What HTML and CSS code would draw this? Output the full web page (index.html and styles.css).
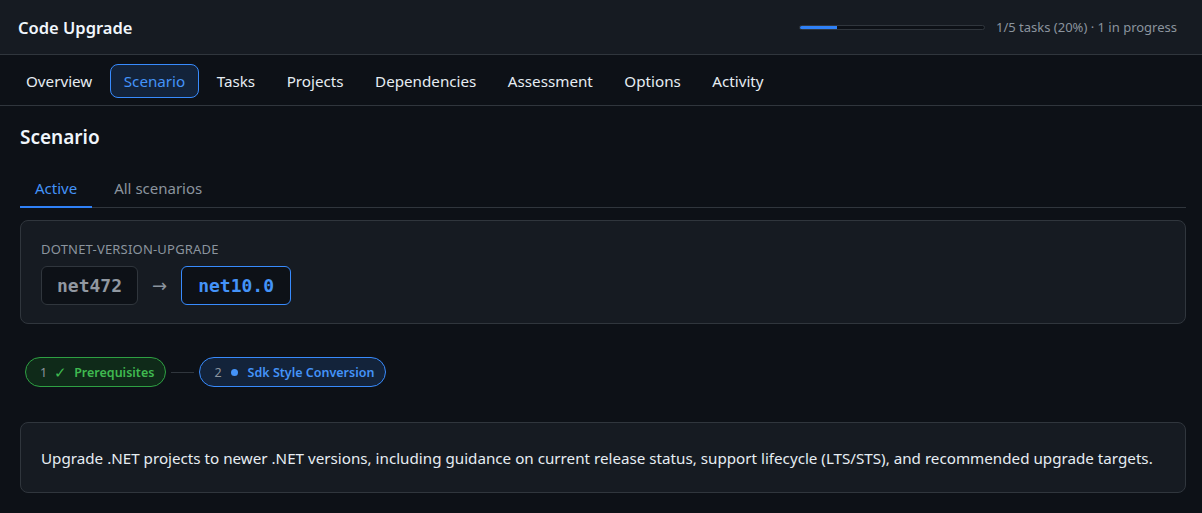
FILE: index.html
```html
<!DOCTYPE html>
<html lang="en">

<head>
    <meta charset="UTF-8">
    <meta name="viewport" content="width=device-width, initial-scale=1.0">
    <title>Code Upgrade</title>
    <link rel="stylesheet" href="styles.css">
</head>

<body>
    <!-- Top bar -->
    <header class="topbar">
        <h1 class="app-title">Code Upgrade</h1>
        <div class="progress">
            <div class="progress-track">
                <div class="progress-fill" style="width: 20%"></div>
            </div>
            <span class="progress-text">1/5 tasks (20%) · 1 in progress</span>
        </div>
    </header>

    <!-- Main navigation -->
    <nav class="main-nav">
        <a class="nav-item">Overview</a>
        <a class="nav-item active">Scenario</a>
        <a class="nav-item">Tasks</a>
        <a class="nav-item">Projects</a>
        <a class="nav-item">Dependencies</a>
        <a class="nav-item">Assessment</a>
        <a class="nav-item">Options</a>
        <a class="nav-item">Activity</a>
    </nav>

    <main class="content">
        <h2 class="section-title">Scenario</h2>

        <div class="sub-tabs">
            <span class="sub-tab active">Active</span>
            <span class="sub-tab">All scenarios</span>
        </div>

        <!-- Scenario card -->
        <section class="card scenario-card">
            <div class="scenario-id">DOTNET-VERSION-UPGRADE</div>
            <div class="versions">
                <span class="chip">net472</span>
                <span class="arrow">→</span>
                <span class="chip chip-target">net10.0</span>
            </div>
        </section>

        <!-- Stages -->
        <div class="stages">
            <span class="stage done">
                <span class="stage-num">1</span>
                <span class="stage-icon">✓</span>
                <span class="stage-name">Prerequisites</span>
            </span>
            <span class="stage-link"></span>
            <span class="stage current">
                <span class="stage-num">2</span>
                <span class="stage-dot"></span>
                <span class="stage-name">Sdk Style Conversion</span>
            </span>
        </div>

        <section class="card desc-card">
            Upgrade .NET projects to newer .NET versions, including guidance on current release status, support lifecycle (LTS/STS), and recommended upgrade targets.
        </section>
    </main>
</body>

</html>
```

FILE: styles.css
```css
* {
    box-sizing: border-box;
}

body {
    margin: 0;
    background: #0d1117;
    color: #e6edf3;
    font-family: "Noto Sans", "Open Sans", sans-serif;
}

/* Top bar */

.topbar {
    height: 55px;
    display: flex;
    align-items: center;
    justify-content: space-between;
    padding: 0 25px 0 18px;
    background: #161b22;
    border-bottom: 1px solid #30363d;
}

.app-title {
    margin: 0;
    font-size: 16.5px;
    font-weight: 600;
    color: #f0f6fc;
}

.progress {
    display: flex;
    align-items: center;
    gap: 11px;
}

.progress-track {
    width: 186px;
    height: 5px;
    background: #0d1117;
    border: 1px solid #30363d;
    border-radius: 3px;
    overflow: hidden;
}

.progress-fill {
    height: 100%;
    background: #2f81f7;
}

.progress-text {
    font-size: 13px;
    color: #8b949e;
}

/* Main navigation */

.main-nav {
    height: 51px;
    display: flex;
    align-items: center;
    gap: 3.5px;
    padding: 1px 12px 0;
    border-bottom: 1px solid #30363d;
}

.nav-item {
    padding: 6px 13px;
    font-size: 15.2px;
    color: #e6edf3;
    border: 1px solid transparent;
    border-radius: 8px;
    cursor: pointer;
}

.nav-item.active {
    color: #4493f8;
    background: #13233a;
    border-color: #388bfd;
}

/* Content */

.content {
    padding: 18px 16px 0 20px;
}

.section-title {
    margin: 0 0 25px;
    font-size: 19px;
    font-weight: 600;
    color: #f0f6fc;
}

.sub-tabs {
    display: flex;
    gap: 7px;
    border-bottom: 1px solid #30363d;
    margin-bottom: 12px;
}

.sub-tab {
    padding: 3px 15px 8px;
    font-size: 15px;
    color: #8b949e;
    border-bottom: 2px solid transparent;
    margin-bottom: -1px;
}

.sub-tab.active {
    color: #4493f8;
    border-bottom-color: #2f81f7;
}

.card {
    background: #161b22;
    border: 1px solid #30363d;
    border-radius: 8px;
}

.scenario-card {
    padding: 19px 20px 18px;
}

.scenario-id {
    font-size: 13px;
    color: #8b949e;
    letter-spacing: 0.2px;
    margin-bottom: 8px;
}

.versions {
    display: flex;
    align-items: center;
    gap: 14px;
}

.chip {
    height: 39px;
    display: inline-flex;
    align-items: center;
    padding: 0 15px;
    background: #0d1117;
    border: 1px solid #30363d;
    border-radius: 6px;
    font-family: "DejaVu Sans Mono", "Liberation Mono", monospace;
    font-size: 18px;
    font-weight: 700;
    color: #9198a1;
}

.chip-target {
    padding: 0 16px;
    color: #4493f8;
    border-color: #388bfd;
}

.arrow {
    font-family: "DejaVu Sans", sans-serif;
    font-size: 18px;
    color: #8b949e;
}

/* Stages */

.stages {
    display: flex;
    align-items: center;
    gap: 5px;
    margin: 33px 0 35px 5px;
}

.stage {
    height: 30px;
    display: inline-flex;
    align-items: center;
    gap: 7px;
    padding: 0 11px 0 14px;
    border: 1px solid;
    border-radius: 15px;
    font-size: 12.5px;
    font-weight: 600;
}

.stage-num {
    font-weight: 400;
    color: #8b949e;
}

.stage.done {
    background: #0f2a19;
    border-color: #2ea043;
    color: #3fb950;
}

.stage-icon {
    font-weight: 400;
    font-size: 15px;
}

.stage.current {
    background: #13233a;
    border-color: #388bfd;
    color: #4493f8;
}

.stage-dot {
    width: 7px;
    height: 7px;
    border-radius: 50%;
    background: #4493f8;
    margin: 0 3px 0 2px;
}

.stage-link {
    width: 23px;
    height: 1px;
    background: #30363d;
}

.desc-card {
    padding: 25px 20px 24px;
    font-size: 15.2px;
    color: #e6edf3;
}
```
